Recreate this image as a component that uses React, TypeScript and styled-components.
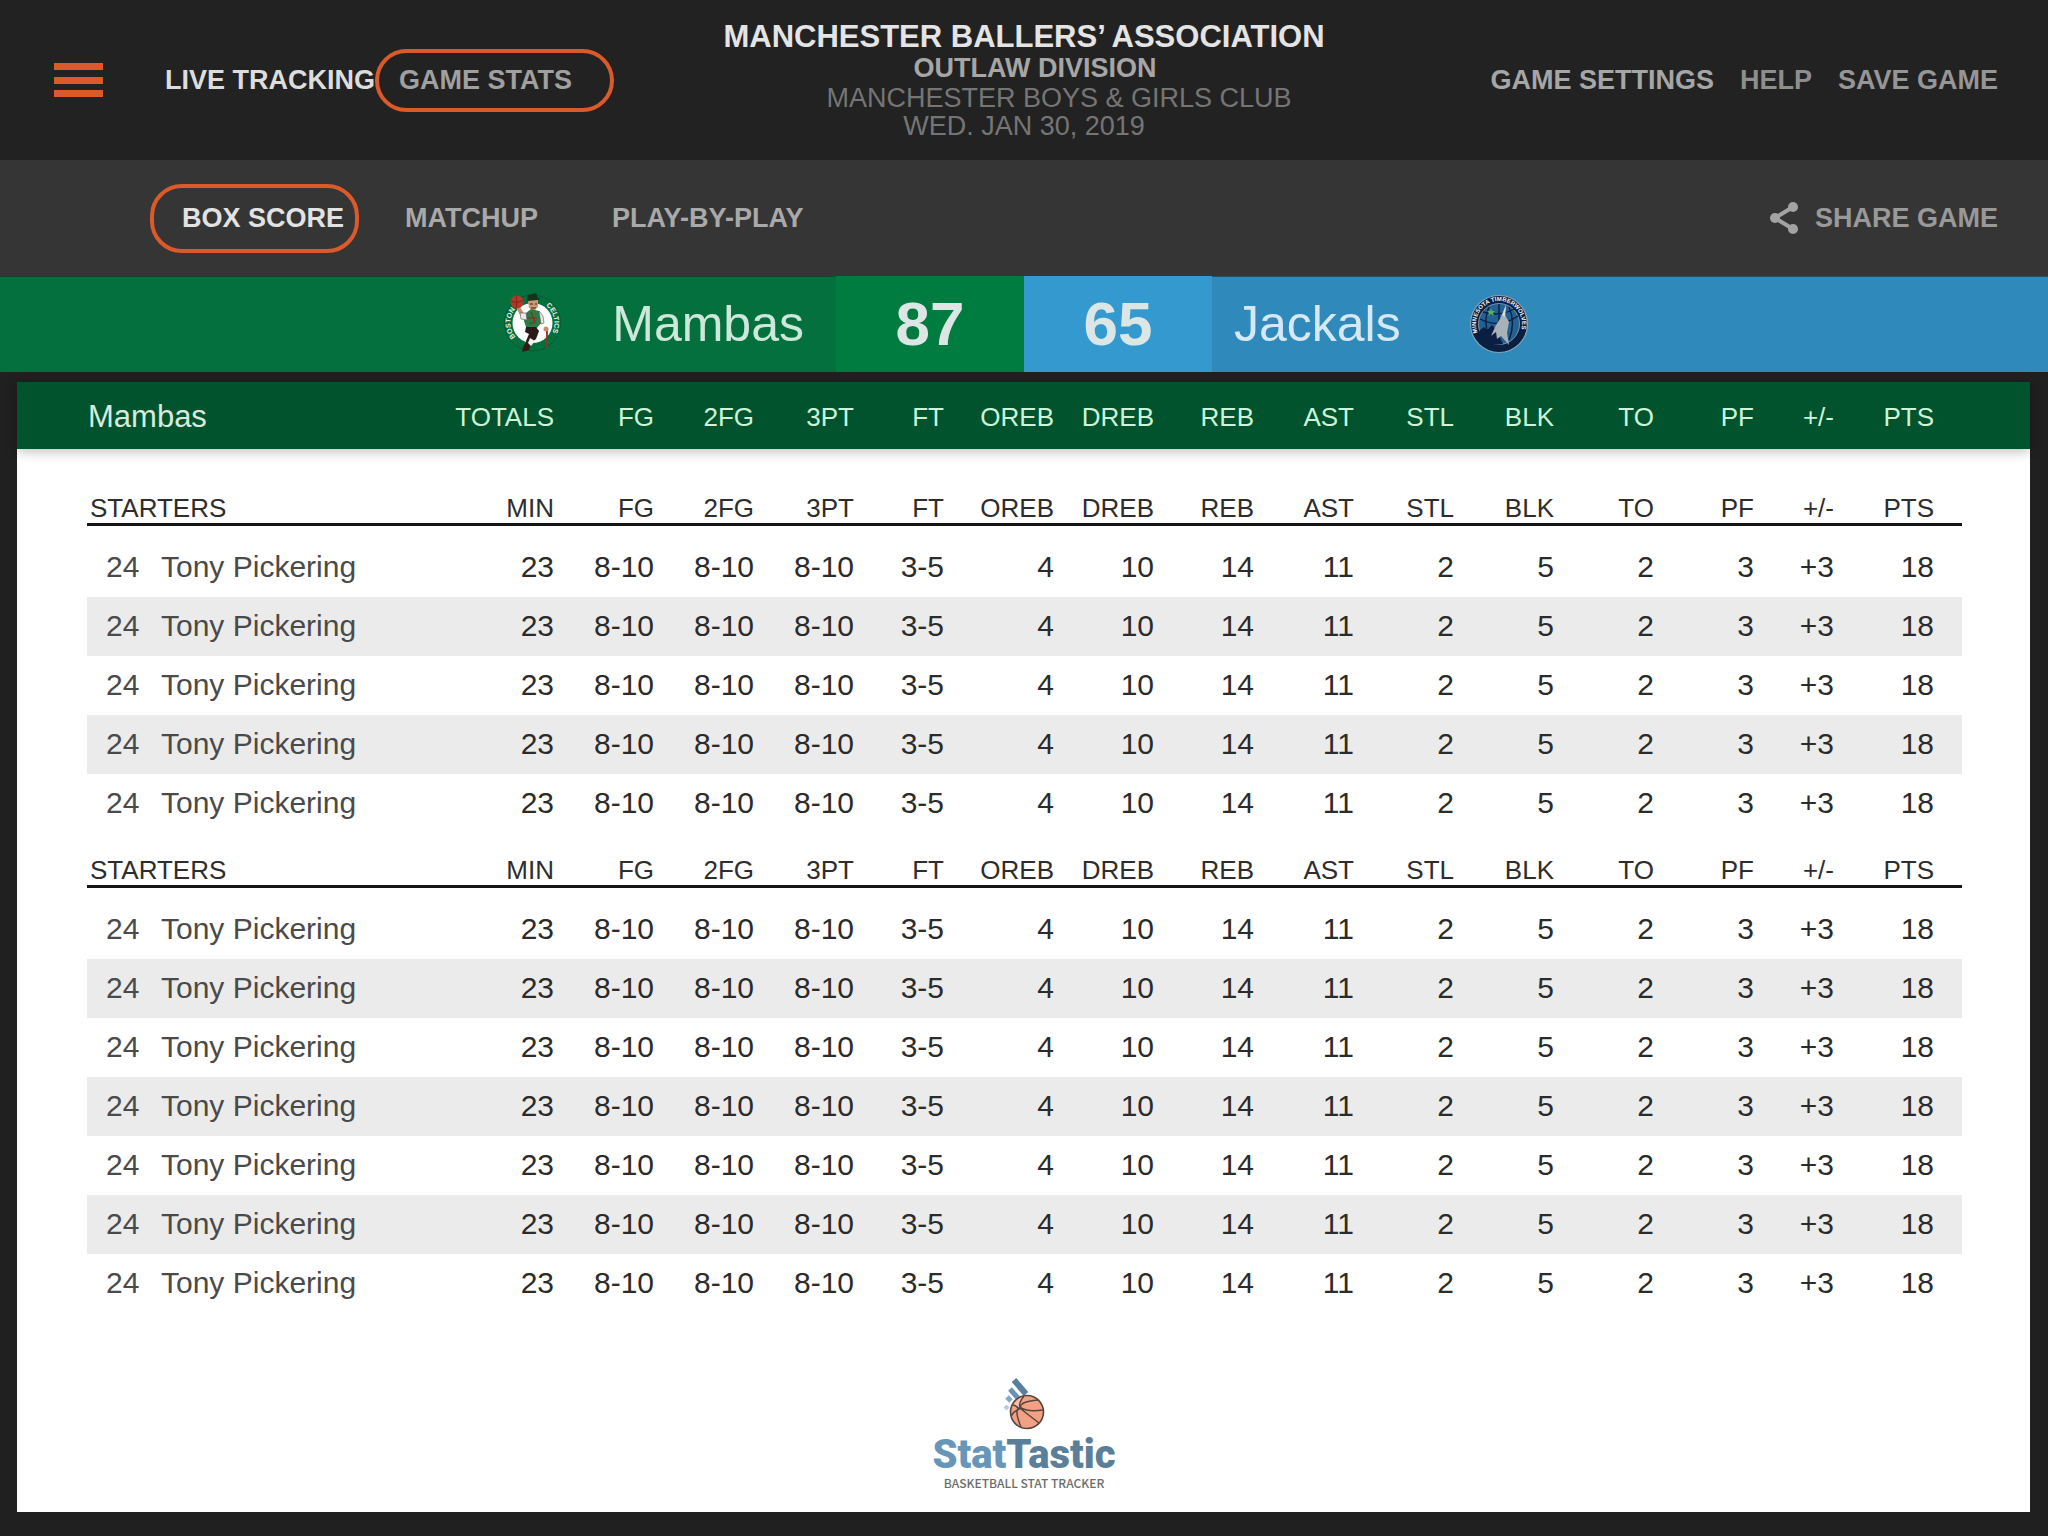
import React from "react";
import styled, { createGlobalStyle } from "styled-components";

const orange = "#dc5a2a";

const GlobalStyle = createGlobalStyle`
  * { box-sizing: border-box; }
  body {
    margin: 0;
    background: #202020;
    font-family: "Liberation Sans", Arial, Helvetica, sans-serif;
  }
`;

const Page = styled.div`
  min-height: 100vh;
  display: flex;
  flex-direction: column;
`;

/* ---------- top bars ---------- */

const Header = styled.header`
  min-height: 160px;
  display: grid;
  grid-template-columns: 1fr auto 1fr;
  align-items: center;
  padding: 0 50px;
  background: #222222;
`;

const HeaderSide = styled.nav<{ $end?: boolean }>`
  display: flex;
  align-items: center;
  justify-content: ${(p) => (p.$end ? "flex-end" : "flex-start")};
  gap: ${(p) => (p.$end ? "26px" : "0")};
`;

const MenuButton = styled.button`
  width: 49px;
  height: 34px;
  margin: 0 62px 0 4px;
  padding: 0;
  border: 0;
  background: none;
  display: flex;
  flex-direction: column;
  justify-content: space-between;
  cursor: pointer;
`;

const MenuBar = styled.span`
  height: 7px;
  background: ${orange};
`;

const NavLink = styled.a<{ $color: string }>`
  color: ${(p) => p.$color};
  font-size: 27px;
  line-height: 30px;
  font-weight: 700;
  text-decoration: none;
  white-space: nowrap;
  display: flex;
  align-items: center;
  gap: 16px;
`;

const PillLink = styled(NavLink)<{ $height: number; $pad: string }>`
  height: ${(p) => p.$height}px;
  padding: ${(p) => p.$pad};
  border: 4px solid ${orange};
  border-radius: 32px;
`;

const GameInfo = styled.div`
  text-align: center;
  color: #757575;
  font-size: 27px;
`;

const League = styled.h1`
  margin: 0;
  color: #e4e4e4;
  font-size: 31px;
  line-height: 32px;
`;

const Division = styled.h2`
  margin: 0;
  padding-left: 22px;
  color: #a6a6a6;
  font-size: 27px;
  line-height: 30px;
`;

const Venue = styled.div`
  padding-left: 70px;
  line-height: 30px;
`;

const GameDate = styled.div`
  line-height: 26px;
`;

const SubNav = styled.nav`
  min-height: 116px;
  display: flex;
  align-items: center;
  gap: 46px;
  padding: 0 50px 0 150px;
  background: #353535;
`;

const TabGroup = styled.div`
  flex: 1;
  display: flex;
  align-items: center;
  gap: 74px;
`;

/* ---------- score bar ---------- */

const ScoreBar = styled.section`
  min-height: 96px;
  display: grid;
  grid-template-columns: 1fr 188px 188px 1fr;
`;

const Team = styled.div<{ $bg: string; $home?: boolean }>`
  display: flex;
  align-items: center;
  justify-content: ${(p) => (p.$home ? "flex-end" : "flex-start")};
  gap: ${(p) => (p.$home ? "46px" : "68px")};
  padding: ${(p) => (p.$home ? "0 32px" : "0 22px")};
  background: ${(p) => p.$bg};
  box-shadow: inset 0 1px 0 rgba(40, 40, 40, 0.6);
`;

const TeamName = styled.span<{ $color: string }>`
  color: ${(p) => p.$color};
  font-size: 50px;
  line-height: 60px;
`;

const Score = styled.strong<{ $bg: string }>`
  display: flex;
  align-items: center;
  justify-content: center;
  background: ${(p) => p.$bg};
  color: #dce6e4;
  font-size: 62px;
  line-height: 70px;
`;

/* ---------- box score ---------- */

const Card = styled.main`
  flex: 1;
  display: flex;
  flex-direction: column;
  margin: 10px 18px 24px 17px;
  background: #ffffff;
`;

const TotalsBar = styled.div`
  padding: 0 68px 0 70px;
  background: #00532c;
  box-shadow: 0 2px 12px rgba(0, 0, 0, 0.28);
`;

const Tables = styled.div`
  padding: 22px 68px 0 70px;
`;

const StatTable = styled.table`
  width: 100%;
  table-layout: fixed;
  border-collapse: separate;
  border-spacing: 0;
`;

const TotalsCell = styled.th`
  height: 67px;
  padding: 2px 1px 0 0;
  color: #cdf3d8;
  font-size: 26px;
  line-height: 30px;
  font-weight: 400;
  text-align: right;
  &:first-child {
    padding-left: 1px;
    color: #d8eade;
    font-size: 31px;
    text-align: left;
  }
  &:last-child {
    padding-right: 28px;
  }
`;

const HeadCell = styled.th`
  height: 55px;
  padding: 22px 1px 0 0;
  border-bottom: 3px solid #151515;
  color: #2d2d2d;
  font-size: 26px;
  line-height: 30px;
  font-weight: 400;
  text-align: right;
  &:first-child {
    padding-left: 3px;
    text-align: left;
  }
  &:last-child {
    padding-right: 28px;
  }
`;

const Body = styled.tbody`
  &::before {
    content: "";
    display: table-row;
    height: 12px;
  }
`;

const Row = styled.tr<{ $shaded: boolean }>`
  background: ${(p) => (p.$shaded ? "#ebebeb" : "#ffffff")};
`;

const Cell = styled.td`
  height: 59px;
  padding: 0 1px 2px 0;
  color: #2b2b2b;
  font-size: 30px;
  line-height: 57px;
  text-align: right;
  white-space: nowrap;
  &:last-child {
    padding-right: 28px;
  }
`;

const LabelCell = styled(Cell)<{ $indent: number }>`
  padding-left: ${(p) => p.$indent}px;
  color: #4a4a4a;
  text-align: left;
`;

/* ---------- brand ---------- */

const Brand = styled.footer`
  margin-top: auto;
  padding: 0 0 22px 1px;
  display: flex;
  flex-direction: column;
  align-items: center;
`;

const BrandName = styled.div`
  color: #6896b8;
  font-family: Roboto, "Liberation Sans", sans-serif;
  font-size: 40px;
  line-height: 42px;
  font-weight: 900;
`;

const BrandAccent = styled.span`
  color: #5b7f98;
`;

const Tagline = styled.div`
  color: #6b6b6b;
  font-family: "Noto Sans CJK JP", "Liberation Sans", sans-serif;
  font-size: 12px;
  line-height: 14px;
  font-weight: 500;
`;

/* ---------- drawings ---------- */

const ShareIcon = () => (
  <svg width="30" height="32" viewBox="0 0 30 32" fill="#a3a3a3" aria-hidden="true">
    <path d="M24 5 L6 16 L24 27" fill="none" stroke="#a3a3a3" strokeWidth="4" />
    <circle cx="24" cy="5" r="5" />
    <circle cx="6" cy="16" r="5" />
    <circle cx="24" cy="27" r="5" />
  </svg>
);

const CelticsLogo = () => (
  <svg width="66" height="70" viewBox="0 0 66 70" role="img" aria-label="Boston Celtics">
    <defs>
      <path id="celtics-left" d="M15.600 48.100 A22 22 0 0 1 18.500 17" />
      <path id="celtics-right" d="M46 16.700 A22 22 0 0 1 48.500 49" />
    </defs>
    <circle cx="32.500" cy="34" r="28" fill="none" stroke="#0a5a34" />
    <circle cx="32.500" cy="34" r="20" fill="#fdfdfd" />
    <g fill="#e8f2ec" fontFamily="Liberation Sans, sans-serif" fontWeight="700" fontSize="7">
      <text><textPath href="#celtics-left">BOSTON</textPath></text>
      <text><textPath href="#celtics-right">CELTICS</textPath></text>
    </g>
    <path d="M23 27 L19 20 L18 16" fill="none" stroke="#c98f6b" strokeWidth="4" />
    <circle cx="17" cy="13" r="6.500" fill="#b5382a" />
    <path d="M11 12 Q17 15 23 11 M16 7 Q18 13 16 19" fill="none" stroke="#6d1f18" strokeWidth="0.800" />
    <path d="M27 10 L28 6 L36 4 L38 9 L41 10 L28 13 Z" fill="#16331f" />
    <path d="M28 12 L38 11 L38 18 L34 22 L29 19 Z" fill="#cf9870" />
    <path d="M30 15 H33 M35 15 H37 M31 19 H36" stroke="#42251a" strokeWidth="1.200" />
    <path d="M26 24 L31 20 L39 22 L42 33 L36 40 L26 38 L24 32 Z" fill="#2d7a42" />
    <path d="M31 23 L35 33 L29 35 M27 29 H37" fill="none" stroke="#7c3322" strokeWidth="1.200" />
    <path d="M20 24 L26 24 L27 31 L21 30 Z M39 22 L43 27 L44 34 L41 35 Z" fill="#e9e9e9" stroke="#555" strokeWidth="0.600" />
    <path d="M26 38 H36 L39 42 L36 50 L31 54 L26 52 L29 45 L25 43 Z" fill="#2a1b18" />
    <path d="M27 51 L32 53 L29 61 L22 63 L23 58 Z" fill="#371b16" />
    <path d="M30 49 L35 52 L31 57 L28 54 Z" fill="#f0f0f0" />
    <circle cx="46" cy="40" r="2.500" fill="#c98f6b" />
    <path d="M47 42 V59" stroke="#9d2c22" strokeWidth="1.800" />
  </svg>
);

const WolvesLogo = () => (
  <svg width="60" height="60" viewBox="0 0 60 60" role="img" aria-label="Minnesota Timberwolves">
    <defs>
      <path id="wolves-ring" d="M11 43 A23 23 0 1 1 49 43" />
    </defs>
    <circle cx="30" cy="30" r="28.500" fill="#0b1f42" stroke="#8ba3b5" strokeWidth="1.200" />
    <circle cx="30" cy="30" r="20.500" fill="#236192" stroke="#90a7b7" strokeWidth="0.800" />
    <path d="M11 25 Q30 35 49 22 M14 18 Q30 23 45 15 M30 10 V49 M20 13 Q13 30 22 46 M40 13 Q47 29 40 46" fill="none" stroke="#0b1f42" strokeWidth="1.400" />
    <path d="M10 37 L15 33 L18 36 L23 31 L28 37 L34 50 Q14 54 10 37 Z" fill="#0b1f42" />
    <path d="M37 11 L36 21 L40 28 L38 39 L40 51 L32 42 L28 45 L27 38 L22 42 L27 31 L31 25 Z" fill="#a8b0b8" />
    <path d="M37 11 L33 21 L36 23 Z" fill="#d5dbe0" />
    <path d="M22 14 L23 17 L26 17 L24 19 L25 22 L22 20 L19 22 L20 19 L18 17 L21 17 Z" fill="#55b05f" />
    <g fill="#f1f4f7" fontFamily="Liberation Sans, sans-serif" fontWeight="700" fontSize="6">
      <text><textPath href="#wolves-ring" startOffset="5">MINNESOTA TIMBERWOLVES</textPath></text>
    </g>
  </svg>
);

const BallLogo = () => (
  <svg width="60" height="60" viewBox="0 0 60 60" aria-hidden="true">
    <path d="M20 6 L32 20" stroke="#587f9d" strokeWidth="6" />
    <path d="M16 15 L24 24" stroke="#6893b5" strokeWidth="5" />
    <path d="M13 23 L17 27" stroke="#83aac8" strokeWidth="5" />
    <path d="M11 32 L14 35" stroke="#b5cddf" strokeWidth="4" />
    <circle cx="33" cy="38" r="16.500" fill="#f3a184" stroke="#574640" strokeWidth="1.600" />
    <path d="M18 32 Q24 24 31 22 Q26 28 26 33 Q20 34 18 32 Z" fill="#f8bda7" />
    <path d="M30 22 Q23 31 27 35 Q32 39 45 49 M49 36 Q34 38 27 34 Q24 28 44 26 M27 34 Q20 37 17 42 M25 34 Q20 36 27 53 M18 31 Q22 31 25 35" fill="none" stroke="#574640" strokeWidth="1.500" />
  </svg>
);

/* ---------- data ---------- */

const statHeads = ["FG", "2FG", "3PT", "FT", "OREB", "DREB", "REB", "AST", "STL", "BLK", "TO", "PF", "+/-", "PTS"];
const columnWidths = [120, 100, 100, 100, 90, 110, 100, 100, 100, 100, 100, 100, 100, 80, 127];

const tony = {
  number: 24,
  name: "Tony Pickering",
  stats: ["23", "8-10", "8-10", "8-10", "3-5", "4", "10", "14", "11", "2", "5", "2", "3", "+3", "18"],
};

const sections = [
  { title: "STARTERS", players: Array(5).fill(tony) },
  { title: "STARTERS", players: Array(7).fill(tony) },
];

const Columns = () => (
  <colgroup>
    <col style={{ width: 74 }} />
    <col />
    {columnWidths.map((w, i) => (
      <col key={i} style={{ width: w }} />
    ))}
  </colgroup>
);

const BoxScoreSection = ({ title, players }: (typeof sections)[number]) => (
  <StatTable>
    <Columns />
    <thead>
      <tr>
        <HeadCell colSpan={2}>{title}</HeadCell>
        {["MIN", ...statHeads].map((h) => (
          <HeadCell key={h}>{h}</HeadCell>
        ))}
      </tr>
    </thead>
    <Body>
      {players.map((p, i) => (
        <Row key={i} $shaded={i % 2 === 1}>
          <LabelCell $indent={19}>{p.number}</LabelCell>
          <LabelCell $indent={0}>{p.name}</LabelCell>
          {p.stats.map((s: string, j: number) => (
            <Cell key={j}>{s}</Cell>
          ))}
        </Row>
      ))}
    </Body>
  </StatTable>
);

export default function App() {
  return (
    <Page>
      <GlobalStyle />
      <Header>
        <HeaderSide>
          <MenuButton aria-label="Menu">
            <MenuBar />
            <MenuBar />
            <MenuBar />
          </MenuButton>
          <NavLink href="#live" $color="#dddddd">LIVE TRACKING</NavLink>
          <PillLink href="#stats" $color="#a0a0a0" $height={63} $pad="0 38px 0 20px">GAME STATS</PillLink>
        </HeaderSide>
        <GameInfo>
          <League>MANCHESTER BALLERS’ ASSOCIATION</League>
          <Division>OUTLAW DIVISION</Division>
          <Venue>MANCHESTER BOYS &amp; GIRLS CLUB</Venue>
          <GameDate>WED. JAN 30, 2019</GameDate>
        </GameInfo>
        <HeaderSide $end>
          <NavLink href="#settings" $color="#a6a6a6">GAME SETTINGS</NavLink>
          <NavLink href="#help" $color="#8e8e8e">HELP</NavLink>
          <NavLink href="#save" $color="#969696">SAVE GAME</NavLink>
        </HeaderSide>
      </Header>

      <SubNav>
        <PillLink href="#box" $color="#e2e2e2" $height={69} $pad="0 11px 0 28px">BOX SCORE</PillLink>
        <TabGroup>
          <NavLink href="#matchup" $color="#a9a9a9">MATCHUP</NavLink>
          <NavLink href="#plays" $color="#a9a9a9">PLAY-BY-PLAY</NavLink>
        </TabGroup>
        <NavLink href="#share" $color="#999999">
          <ShareIcon />
          SHARE GAME
        </NavLink>
      </SubNav>

      <ScoreBar>
        <Team $bg="#03703d" $home>
          <CelticsLogo />
          <TeamName $color="#cde8da">Mambas</TeamName>
        </Team>
        <Score $bg="#007c41">87</Score>
        <Score $bg="#3399cf">65</Score>
        <Team $bg="#2f8abb">
          <TeamName $color="#d5e8f3">Jackals</TeamName>
          <WolvesLogo />
        </Team>
      </ScoreBar>

      <Card>
        <TotalsBar>
          <StatTable>
            <Columns />
            <thead>
              <tr>
                <TotalsCell colSpan={2}>Mambas</TotalsCell>
                {["TOTALS", ...statHeads].map((h) => (
                  <TotalsCell key={h}>{h}</TotalsCell>
                ))}
              </tr>
            </thead>
          </StatTable>
        </TotalsBar>
        <Tables>
          {sections.map((s, i) => (
            <BoxScoreSection key={i} {...s} />
          ))}
        </Tables>
        <Brand>
          <BallLogo />
          <BrandName>
            Stat<BrandAccent>Tastic</BrandAccent>
          </BrandName>
          <Tagline>BASKETBALL STAT TRACKER</Tagline>
        </Brand>
      </Card>
    </Page>
  );
}
